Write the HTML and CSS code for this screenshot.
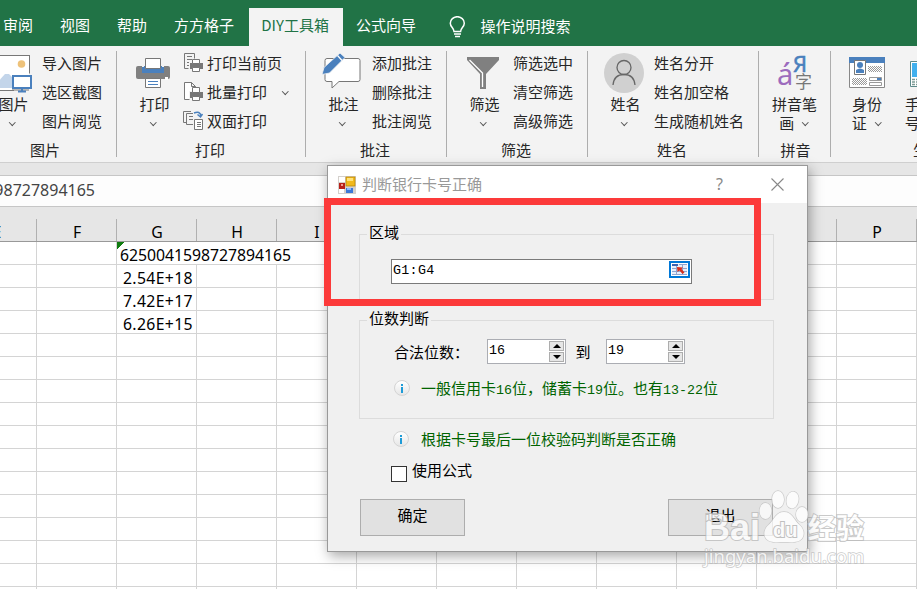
FILE: index.html
```html
<!DOCTYPE html>
<html lang="zh-CN">
<head>
<meta charset="utf-8">
<title>DIY工具箱</title>
<link rel="stylesheet" href="styles.css">
</head>
<body>
<div class="app">
  <nav class="tabs">
    <span class="tab">审阅</span><span class="tab">视图</span><span class="tab">帮助</span><span class="tab">方方格子</span><span class="tab active">DIY工具箱</span><span class="tab">公式向导</span>
    <svg class="bulb" width="17" height="22" viewBox="0 0 17 22" fill="none" stroke="#fff" stroke-width="1.5"><path d="M5 15.500c0-3.500-3.700-4.500-3.700-8.300a7 6.500 0 0 1 14 0c0 3.800-3.700 4.800-3.700 8.300zM5 18h7M6 20.500h5"/></svg>
    <span class="tell">操作说明搜索</span>
  </nav>

  <div class="ribbon">
    <section class="group g-pic">
      <div class="tools">
        <div class="big">
          <svg class="icon" width="40" height="40" viewBox="0 0 40 40"><path d="M0 3.500h37.500v18M37 38H0" fill="#fff" stroke="#777"/><path d="M0 4h37v19H20v15H0z" fill="#fff"/><circle cx="29.500" cy="12" r="3.800" fill="#eec27a"/><path d="M0 36l13-14h4l4 4v10z" fill="#c3d5ea"/><path d="M0 38.500h22M37.500 3v18" stroke="#777" fill="none"/><rect x="21" y="24" width="18" height="12" fill="#fff" stroke="#4a80bd" stroke-width="2"/><path d="M30 36v3M26 39.500h8" stroke="#4a80bd" stroke-width="2"/></svg>
          <span class="name">图片</span><i class="chev"></i>
        </div>
        <div class="list"><span>导入图片</span><span>选区截图</span><span>图片阅览</span></div>
      </div>
      <h2>图片</h2>
    </section>

    <section class="group g-print">
      <div class="tools">
        <div class="big">
          <svg class="icon" width="40" height="40" viewBox="0 0 40 40"><path d="M5 14h30q2 0 2 2v9q0 2-2 2H5q-2 0-2-2V16q0-2 2-2z" fill="#808080"/><path d="M9 14h22v7H9z" fill="#4a80bd"/><path d="M9 13h2v2H9zM29 13h2v2h-2z" fill="#f3f3f3"/><path d="M12.500 6.500h15v10h-15z" fill="#fff" stroke="#777"/><path d="M12.500 26.500h15v9h-15z" fill="#fff" stroke="#777"/><path d="M15 29.500h10M15 32.500h10" stroke="#4a80bd"/><path d="M32 25h3v3h-3z" fill="#fff"/></svg>
          <span class="name">打印</span><i class="chev"></i>
        </div>
        <div class="list with-icons">
          <span><svg width="20" height="20" viewBox="0 0 20 20" fill="none" stroke="#777"><path d="M4.500 15.500H.5V.5h10v5M3 3.500h5M3 6.500h5M3 9.500h2M3 12.500h2"/><path d="M6 10h13v6H6z" fill="#777" stroke="none"/><path d="M8.500 6.500h7v4h-7zM8.500 14.500h7v4h-7z" fill="#fff"/></svg>打印当前页</span>
          <span><svg width="20" height="20" viewBox="0 0 20 20" fill="none" stroke="#777"><path d="M5.500 17.500H.5V.5h7l4 4v1M7.500.5v4h4" /><path d="M1 1h6v4h3v4H5v8H1z" fill="#fff" stroke="none"/><path d="M6 10h13v6H6z" fill="#777" stroke="none"/><path d="M8.500 5.500h7v5h-7zM8.500 14.500h7v4h-7z" fill="#fff"/></svg>批量打印<i class="chev"></i></span>
          <span><svg width="20" height="20" viewBox="0 0 20 20" fill="none" stroke="#777"><path d="M2 11.500H-.5v-11H7M9 13.500H2.500v-11H9M5 5.500h4M5 8.500h4"/><path d="M10.500 8.500h8v10h-8z" fill="#fff"/><path d="M13 11.500h4M13 13.500h4M13 15.500h4"/><path d="M10 2q6-2.500 7 3M13.500 3.500l3 2.500 2-3" stroke="#4a80bd" stroke-width="1.500"/></svg>双面打印</span>
        </div>
      </div>
      <h2>打印</h2>
    </section>

    <section class="group g-note">
      <div class="tools">
        <div class="big">
          <svg class="icon" width="40" height="40" viewBox="0 0 40 40"><path d="M5 6.500h31q2 0 2 2v19q0 2-2 2H17L10 36v-6.500H5q-2 0-2-2v-19q0-2 2-2z" fill="#fff" stroke="#777"/><path d="M0 22.500l2-7L18 1l5 4.500L7.500 21z" fill="#4a80bd" stroke="#f3f3f3" stroke-width=".8"/><path d="M15.500 3.500l4.500 5" stroke="#fff" stroke-width="1.200"/></svg>
          <span class="name">批注</span><i class="chev"></i>
        </div>
        <div class="list"><span>添加批注</span><span>删除批注</span><span>批注阅览</span></div>
      </div>
      <h2>批注</h2>
    </section>

    <section class="group g-filter">
      <div class="tools">
        <div class="big">
          <svg class="icon" width="40" height="40" viewBox="0 0 40 40"><path d="M4 5h32v3L23 22v15h-6V22L4 8z" fill="#808080"/><path d="M6.500 8L19.500 21v14" fill="none" stroke="#fff" stroke-width="1.300"/></svg>
          <span class="name">筛选</span><i class="chev"></i>
        </div>
        <div class="list"><span>筛选选中</span><span>清空筛选</span><span>高级筛选</span></div>
      </div>
      <h2>筛选</h2>
    </section>

    <section class="group g-name">
      <div class="tools">
        <div class="big">
          <svg class="icon" width="40" height="40" viewBox="0 0 40 40"><circle cx="20" cy="21" r="20" fill="#d0d0d0"/><g fill="none" stroke="#666" stroke-width="1.300"><circle cx="20" cy="15.500" r="7"/><path d="M9 33q1-10.500 11-10.500T31 33"/></g></svg>
          <span class="name">姓名</span><i class="chev"></i>
        </div>
        <div class="list"><span>姓名分开</span><span>姓名加空格</span><span>生成随机姓名</span></div>
      </div>
      <h2>姓名</h2>
    </section>

    <section class="group g-pinyin">
      <div class="tools">
        <div class="big">
          <svg class="icon" width="40" height="40" viewBox="0 0 40 40"><text class="py-a" x="2" y="33">á</text><text class="py-r" x="18" y="20">Я</text><text class="py-z" x="20" y="36">字</text></svg>
          <span class="name">拼音笔</span><span class="name second">画<i class="chev"></i></span>
        </div>
      </div>
      <h2>拼音</h2>
    </section>

    <section class="group g-id">
      <div class="tools">
        <div class="big">
          <svg class="icon" width="40" height="40" viewBox="0 0 40 40"><path d="M2.500 5.500h35v30h-35z" fill="#fff" stroke="#888"/><path d="M2 5h36v6H2z" fill="#4a80bd"/><path d="M7.500 8.500h11v14h-11z" fill="#fff" stroke="#777"/><circle cx="13" cy="13" r="3" fill="#4a80bd"/><path d="M9 21v-3q4-3 8 0v3z" fill="#4a80bd"/><path d="M21 14.500h14M21 16.500h14M21 18.500h14M5 27.500h15M5 29.500h15M5 31.500h15" stroke="#999" stroke-dasharray="1 1"/><path d="M22 15.500h13M22 17.500h13M22 19.500h13M6 26.500h14M6 28.500h14M6 30.500h14M6 32.500h14" stroke="#999" stroke-dasharray="1 1"/><path d="M22.500 25.500h12v3h-12zM22.500 30.500h12v3h-12z" fill="#fff" stroke="#999"/><path d="M30 26h4v2h-4z" fill="#4a80bd"/></svg>
          <span class="name">身份</span><span class="name second">证<i class="chev"></i></span>
        </div>
        <div class="big phone">
          <svg class="icon" width="40" height="40" viewBox="0 0 40 40"><path d="M10.500 9.500h24v25h-24z" fill="#fff" stroke="#5c8a8a"/><path d="M12 11h21v14H12z" fill="#41b0ee"/><path d="M12 27.500h20M12 30h20M12 32.500h20" stroke="#7b9a94" stroke-width="1.500" stroke-dasharray="3 1"/></svg>
          <span class="name">手机</span><span class="name second">号<i class="chev"></i></span>
        </div>
      </div>
      <h2>生成器</h2>
    </section>
  </div>

  <div class="formula"><span>6250041598727894165</span></div>

  <div class="sheet">
    <div class="heads"><b>E</b><b>F</b><b>G</b><b>H</b><b>I</b><b>J</b><b>K</b><b>L</b><b>M</b><b>N</b><b>O</b><b>P</b></div>
    <div class="cells">
      <div class="row"><i></i><i></i><i class="wide">6250041598727894165</i><i></i><i></i><i></i><i></i><i></i><i></i><i></i></div>
      <div class="row"><i></i><i></i><i>2.54E+18</i><i></i><i></i><i></i><i></i><i></i><i></i><i></i><i></i><i></i></div>
      <div class="row"><i></i><i></i><i>7.42E+17</i><i></i><i></i><i></i><i></i><i></i><i></i><i></i><i></i><i></i></div>
      <div class="row"><i></i><i></i><i>6.26E+15</i><i></i><i></i><i></i><i></i><i></i><i></i><i></i><i></i><i></i></div>
      <div class="blank"></div>
    </div>
  </div>
</div>

<div class="dialog">
  <header>
    <svg width="18" height="18" viewBox="0 0 18 18"><rect width="18" height="18" fill="#d4d0cc"/><path d="M1 1h6v5H1zM1 13h5v4H1z" fill="#fff"/><rect x="8" y="1" width="9" height="9" fill="#f2b91c" stroke="#b78400" stroke-width=".7"/><path d="M9 2h6v3H9z" fill="#ffe27a"/><rect x="1" y="7" width="6" height="6" fill="#b8201a"/><path d="M3 8h2v2H3z" fill="#f29a90"/><rect x="8" y="12" width="7" height="5" fill="#3c78d8"/><path d="M9 12h4v2H9z" fill="#8ab8ff"/></svg>
    <span class="title">判断银行卡号正确</span>
    <span class="help">?</span>
    <svg class="close" width="13" height="13" viewBox="0 0 13 13" stroke="#888" stroke-width="1.100"><path d="M.5.5l12 12M12.500.5l-12 12"/></svg>
  </header>
  <div class="body">
    <fieldset class="area">
      <legend>区域</legend>
      <div class="ref"><span class="lat">G1:G4</span>
        <svg width="21" height="17" viewBox="0 0 21 17"><rect x="1" y="1" width="19" height="15" fill="#fff" stroke="#0078d7" stroke-width="2"/><path d="M3 3h15v11H3z" fill="#e8eefa"/><path d="M3 4h6" stroke="#3a62b0" stroke-width="2"/><path d="M10 3.500h8M3 7.500h15M3 10.500h15M3 13.500h15M7.500 5v9M13.500 3v11" stroke="#8fa6d2"/><path d="M8 6l6 .500-1.500 1.500 3 3.500-2 1.500-3-3.500L8.500 11z" fill="#d8301c"/></svg>
      </div>
    </fieldset>
    <fieldset class="digits">
      <legend>位数判断</legend>
      <div class="range">
        <label>合法位数：</label>
        <div class="num"><span class="lat">16</span><div class="spin"><b class="up"></b><b class="down"></b></div></div>
        <span class="to">到</span>
        <div class="num"><span class="lat">19</span><div class="spin"><b class="up"></b><b class="down"></b></div></div>
      </div>
      <div class="info"><span class="dot"></span><p>一般信用卡<span class="lat">16</span>位，储蓄卡<span class="lat">19</span>位。也有<span class="lat">13-22</span>位</p></div>
    </fieldset>
    <div class="info check-info"><span class="dot"></span><p>根据卡号最后一位校验码判断是否正确</p></div>
    <div class="use"><span class="box"></span>使用公式</div>
    <div class="actions"><button>确定</button><button>退出</button></div>
  </div>
</div>

<div class="highlight"></div>

<div class="watermark">
  <div class="brand">
    <span class="bai">Bai</span>
    <svg width="50" height="54" viewBox="0 0 50 54"><g fill="#fff" stroke="#bdbdbd" stroke-width="1.300"><ellipse cx="6.500" cy="21" rx="6" ry="8"/><ellipse cx="19" cy="9.500" rx="6" ry="8.500"/><ellipse cx="33.500" cy="10" rx="6" ry="8.500" transform="rotate(10 33.500 10)"/><ellipse cx="43" cy="24.500" rx="6" ry="7.500"/><path d="M25 22c-8 0-10 8-15 12.500-5 4-6 10-3 14 4 5 12 3.500 18 3.500s14 1.500 18-3.500c3-4 2-10-3-14-5-4.500-7-12.500-15-12.500z"/></g><text class="du" x="14" y="47">du</text></svg>
    <span class="cn">经验</span>
  </div>
  <div class="url">jingyan.baidu.com</div>
</div>
</body>
</html>
```
FILE: styles.css
```css
* { box-sizing: border-box; }
body { margin: 0; width: 917px; height: 589px; overflow: hidden; position: relative; background: #fff; font: 15px/20px "Noto Sans CJK SC", sans-serif; color: #262626; }
.app { width: 917px; height: 589px; overflow: hidden; display: flex; flex-direction: column; background: #e6e6e6; }
i, b { font-style: normal; font-weight: inherit; }

.tabs { height: 46px; padding-top: 8px; background: #217346; color: #fff; display: flex; flex: none; white-space: nowrap; }
.tab { padding: 0 13.5px; line-height: 34px; }
.tab:first-child { margin-left: -10.5px; }
.tab.active { width: 94px; height: 38px; margin-left: 1px; padding: 0 1px 0 0; text-align: center; background: #f3f3f3; color: #217346; }
.bulb { margin: 8px 15px 0 19px; }
.tell { line-height: 36px; }

.ribbon { height: 117px; flex: none; display: flex; background: #f3f3f3; border-bottom: 1px solid #cfcfcf; }
.group { flex: none; height: 106px; margin-top: 5px; border-right: 1px solid #adadad; display: flex; flex-direction: column; white-space: nowrap; }
.g-pic { width: 143px; margin-left: -26px; }
.g-print { width: 189px; }
.g-note, .g-filter { width: 141px; }
.g-name { width: 171px; }
.g-pinyin { width: 72px; }
.g-id { width: 212px; }
.tools { height: 89px; display: flex; flex: none; }
.group h2 { margin: 0; padding-right: 2px; font: inherit; text-align: center; line-height: 20px; }
.g-pic h2 { padding: 0; }
.g-pinyin h2 { padding: 0 0 0 2px; }
.big { width: 66px; padding-left: 6px; display: flex; flex-direction: column; align-items: center; flex: none; }
.g-pic .big { width: 68px; padding-left: 8px; }
.g-print .big { width: 67px; padding-left: 5px; }
.g-pinyin .big { width: 71px; padding-left: 0; }
.g-id .big { width: 70px; padding-left: 2px; }
.g-id .phone { width: 38px; padding: 0; }
.icon { height: 40px; flex: none; margin-top: 1px; overflow: visible; }
.name { line-height: 20px; margin: 2px 0 0 3px; }
.g-pic .icon, .g-pic .chev { overflow: visible; }
.g-pinyin .name, .g-id .name { margin-left: 0; }
.name.second { margin-top: -1px; display: flex; align-items: center; gap: 9px; padding-right: 2px; }
.chev { width: 4.5px; height: 4.5px; border: solid #555; border-width: 0 1px 1px 0; transform: rotate(45deg); }
.second .chev { position: relative; top: -1px; }
.name + .chev { margin-top: 6px; }
.list { display: flex; flex-direction: column; margin-top: -3px; }
.list > span { height: 29px; display: flex; align-items: center; }
.with-icons svg { margin-right: 3px; overflow: visible; }
.with-icons .chev { margin-left: 16px; }
.py-a { font: 29px "Noto Sans"; fill: #9c6bbd; }
.py-r { font: 22px "Noto Sans"; fill: #4a80bd; stroke: #4a80bd; stroke-width: .5px; }
.py-z { font: 17px "Noto Sans CJK SC"; fill: #777; }

.formula { height: 32px; flex: none; border: solid #c6c6c6; border-width: 1px 0; margin-top: 12px; background: #fdfdfd; font: 16px/29px "Noto Sans", sans-serif; color: #444; display: flex; }
.formula span { width: 95px; display: flex; justify-content: flex-end; }

.sheet { width: 960px; margin-left: -43px; flex: 1; background: #fff; color: #000; font: 15.8px/23px "Noto Sans", sans-serif; }
.heads { height: 35px; padding-top: 12px; display: grid; grid-template-columns: repeat(12, 80px); background: #e6e6e6; border-bottom: 1px solid #999; text-align: center; }
.heads b { height: 22px; line-height: 26px; padding-left: 1px; border-right: 1px solid #b0b0b0; }
.row { display: grid; grid-template-columns: repeat(12, 80px); height: 23px; }
.row i { height: 23px; border: solid #d4d4d4; border-width: 0 1px 1px 0; text-align: right; padding-right: 3px; line-height: 26px; letter-spacing: .35px; }
.row .wide { grid-column: span 3; text-align: left; padding-left: 3px; letter-spacing: -.03px; background: linear-gradient(135deg, #107c10 5px, transparent 5px) no-repeat; }
.blank { height: 260px; background: repeating-linear-gradient(90deg, transparent 0 79px, #d4d4d4 79px 80px), repeating-linear-gradient(180deg, transparent 0 22px, #d4d4d4 22px 23px); }

.dialog { position: absolute; left: 327px; top: 165px; width: 481px; height: 387px; border: 1px solid #999; background: #f0f0f0; box-shadow: 2px 4px 12px rgba(0,0,0,.35); color: #000; }
.dialog header { height: 37px; background: #fff; display: flex; align-items: center; padding: 0 23px 0 10px; color: #999; }
.title { margin-left: 6px; flex: 1; padding-bottom: 2px; }
.help { font: 16px "Noto Sans"; margin-right: 48px; color: #888; padding-bottom: 2px; }
.body { padding: 22px 32px 0 31px; line-height: 19px; }
fieldset { margin: 0; border: 1px solid #dcdcdc; width: 415px; min-width: 0; }
legend { height: 19px; line-height: 13px; padding: 0 2px; }
.area { height: 75px; padding: 0 0 0 7px; }
.digits { height: 108px; margin-top: 11px; padding: 0 0 0 7px; }
.lat { font: 13.33px/20px "Liberation Mono", monospace; }
.ref { width: 301px; height: 25px; margin: 15px 0 0 24px; padding: 1px 1px 0 1px; background: #fff; border: 1px solid #7a7a7a; display: flex; justify-content: space-between; }
.ref .lat { letter-spacing: .3px; }
.range { display: flex; margin: 9px 0 0 27px; height: 25px; }
.range label { width: 93px; line-height: 25px; }
.num { width: 79px; height: 25px; border: 1px solid #abadb3; background: #fff; padding: 1px 1px 0 1px; display: flex; justify-content: space-between; }
.spin { width: 15px; height: 21px; display: grid; gap: 1px; }
.spin b { border: 1px solid #adadad; background: #e6e6e6; display: grid; place-items: center; }
.spin b::after { content: ""; border: solid transparent; border-width: 0 4px 4px; border-bottom-color: #000; }
.spin .down::after { transform: scaleY(-1); }
.to { width: 40px; text-align: center; line-height: 25px; padding-right: 6px; }
.info { display: flex; align-items: center; height: 24px; color: #006400; }
.info p { margin: 0; padding-bottom: 1px; }
.info .lat { line-height: 1; }
.digits .info { margin: 12px 0 0 27px; }
.dot { width: 16px; height: 16px; border: 1px solid #d4d4d4; border-radius: 50%; margin-right: 11px; display: grid; justify-items: center; align-content: center; gap: 1px; background: linear-gradient(#fff, #e6e6e6); }
.dot::before, .dot::after { content: ""; width: 2px; height: 2px; background: #1e9bd7; }
.dot::after { height: 6px; }
.check-info { margin: 8px 0 0 34px; }
.check-info .dot { margin-right: 12px; }
.check-info p { padding-bottom: 2px; }
.use { display: flex; margin: 11px 0 0 32px; height: 22px; line-height: 16px; }
.box { width: 16px; height: 16px; margin: 4px 5px 0 0; background: #fff; border: 1px solid #333; }
.actions { display: flex; justify-content: space-between; margin: 15px 2px 0 1px; }
.actions button { width: 105px; height: 37px; padding: 0 0 6px; border: 1px solid #adadad; background: #e1e1e1; font: inherit; color: #000; }

.highlight { position: absolute; left: 324px; top: 198px; width: 437px; height: 108px; border: 7px solid #fc3a3a; }

.watermark { position: absolute; left: 704px; top: 490px; width: 170px; color: #fff; opacity: .75; white-space: nowrap; -webkit-text-stroke: 2px #b8b8b8; paint-order: stroke fill; }
.brand { display: flex; height: 54px; font: bold 36px/76px "Liberation Sans"; }
.bai { width: 55px; }
.brand svg { flex: none; overflow: visible; }
.brand .cn { font: bold 28px/74px "Noto Sans CJK SC"; margin-left: -1px; }
.du { font: bold 20px "Liberation Sans"; fill: #fff; stroke: #b0b0b0; stroke-width: 2px; paint-order: stroke fill; }
.url { font: 18.5px/24px "Noto Sans"; -webkit-text-stroke-width: 1.5px; }
```
